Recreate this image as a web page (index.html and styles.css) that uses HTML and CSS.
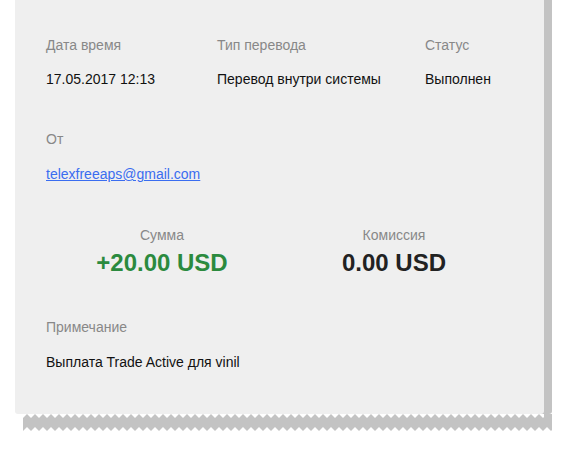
FILE: index.html
```html
<!DOCTYPE html>
<html lang="ru">
<head>
    <meta charset="UTF-8">
    <meta name="viewport" content="width=device-width, initial-scale=1.0">
    <title>Детали перевода</title>
    <link rel="stylesheet" href="styles.css">
</head>
<body>
    <div class="receipt">
        <div class="info-row">
            <div class="field">
                <div class="label">Дата время</div>
                <div class="value">17.05.2017 12:13</div>
            </div>
            <div class="field">
                <div class="label">Тип перевода</div>
                <div class="value">Перевод внутри системы</div>
            </div>
            <div class="field">
                <div class="label">Статус</div>
                <div class="value">Выполнен</div>
            </div>
        </div>

        <div class="field from">
            <div class="label">От</div>
            <div class="value"><a href="#">telexfreeaps@gmail.com</a></div>
        </div>

        <div class="totals">
            <div class="total">
                <div class="label">Сумма</div>
                <div class="amount plus">+20.00 USD</div>
            </div>
            <div class="total">
                <div class="label">Комиссия</div>
                <div class="amount">0.00 USD</div>
            </div>
        </div>

        <div class="field note">
            <div class="label">Примечание</div>
            <div class="value">Выплата Trade Active для vinil</div>
        </div>
    </div>
    <!-- torn paper shadow -->
    <svg class="receipt-edge" width="529" height="17" aria-hidden="true">
        <defs>
            <pattern id="zigzag" width="8" height="17" patternUnits="userSpaceOnUse">
                <polygon points="0,4 4,0 8,4 8,17 4,13 0,17" fill="#c3c3c3"/>
            </pattern>
        </defs>
        <rect width="529" height="17" fill="url(#zigzag)"/>
        <rect x="521" width="8" height="10" fill="#c3c3c3"/>
    </svg>
</body>
</html>
```

FILE: styles.css
```css
/* Reset & Global Styles */
* {
    margin: 0;
    padding: 0;
    box-sizing: border-box;
}
body {
    font-family: 'Liberation Sans', Arial, sans-serif;
    background: #fff;
    color: #111;
    font-size: 14px;
    line-height: 16px;
}
.receipt {
    width: 529px;
    margin-left: 15px;
    padding: 37px 31px 44px;
    background: #efefef;
    border-radius: 0 0 3px 3px;
    box-shadow: 8px 0 0 #c3c3c3;
}
.receipt-edge {
    display: block;
    margin-left: 23px;
}
.label {
    color: #888;
}
.value {
    margin-top: 18px;
}
.value a {
    color: #3a6df0;
}
.info-row {
    display: grid;
    grid-template-columns: 171px 208px auto;
}
.from {
    margin-top: 44px;
}
.from .value,
.note .value {
    margin-top: 19px;
}
.totals {
    display: grid;
    grid-template-columns: 1fr 1fr;
    margin-top: 45px;
    padding-right: 3px;
    text-align: center;
}
.amount {
    margin-top: 6px;
    font-size: 24px;
    line-height: 28px;
    font-weight: 700;
    color: #222;
}
.amount.plus {
    color: #2b8a3e;
}
.note {
    margin-top: 42px;
}
```
